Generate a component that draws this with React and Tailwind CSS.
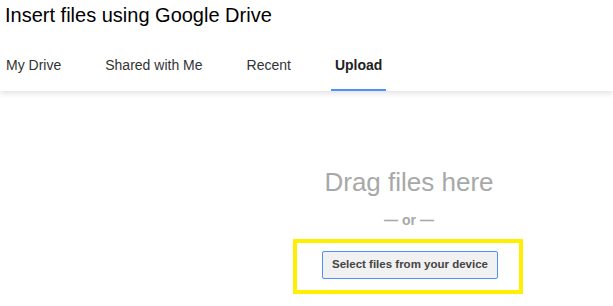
import React from 'react';

const tabs = [
  { label: 'My Drive' },
  { label: 'Shared with Me' },
  { label: 'Recent' },
  { label: 'Upload', active: true },
];

const Tab = ({ label, active }) => (
  <div
    className={`px-1 pb-4 text-[14px] leading-4 border-b-2 ${
      active ? 'border-[#4d90fe] font-bold text-[#222]' : 'border-transparent text-[#333]'
    }`}
  >
    {label}
  </div>
);

const App = () => {
  return (
    <div className="w-full h-[306px] overflow-hidden bg-white font-['Liberation_Sans',Arial,sans-serif]">
      <header className="relative z-10 bg-white shadow-[0_2px_6px_rgba(0,0,0,0.13)]">
        <h1 className="pl-[5px] pt-1 text-[20px] leading-[23px] font-normal text-black">
          Insert files using Google Drive
        </h1>
        <nav className="mt-[30px] pl-[2px] flex gap-9">
          {tabs.map((t) => (
            <Tab key={t.label} {...t} />
          ))}
        </nav>
      </header>

      <main className="w-[818px] flex flex-col items-center pt-[76px]">
        <div className="text-[26px] leading-[30px] text-[#a8a8a8]">Drag files here</div>
        <div className="mt-[15px] text-[14px] leading-4 font-bold text-[#a8a8a8]">— or —</div>
        <div className="mt-[11px] mr-[2px] w-[230px] border-4 border-[#ffef00] pt-2 pb-[11px] pl-1 flex justify-center">
          <button className="h-[28px] px-[9px] rounded-[2px] border border-[#4d90fe] bg-[#f1f1f1] text-[11.5px] font-bold text-[#444]">
            Select files from your device
          </button>
        </div>
      </main>
    </div>
  );
};

export default App;
